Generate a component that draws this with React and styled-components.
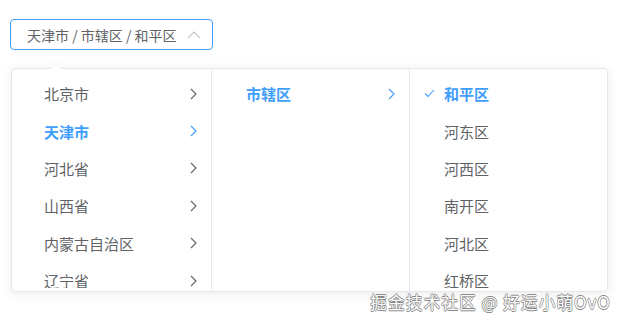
import React from "react";
import styled, { createGlobalStyle } from "styled-components";

const Global = createGlobalStyle`
  html, body { margin: 0; padding: 0; background: #fff; }
  body { font-family: "Noto Sans CJK SC", "Noto Sans", sans-serif; }
`;

const Page = styled.div`
  position: relative;
  width: 621px;
  height: 324px;
  padding: 19px 0 0 10px;
  box-sizing: border-box;
  overflow: hidden;
`;

const Input = styled.div`
  width: 203px;
  height: 31px;
  box-sizing: border-box;
  border: 1px solid #409eff;
  border-radius: 4px;
  display: flex;
  align-items: center;
  justify-content: space-between;
  padding: 0 11px 0 16px;
  font-size: 14px;
  color: #606266;
`;

const Panel = styled.div`
  position: relative;
  margin-top: 18px;
  margin-left: 1px;
  width: 597px;
  height: 224px;
  box-sizing: border-box;
  border: 1px solid #e4e7ed;
  border-radius: 4px;
  background: #fff;
  box-shadow: 0 2px 12px 0 rgba(0, 0, 0, 0.08);
  display: flex;
`;

const PopArrow = styled.div`
  position: absolute;
  top: -6px;
  left: 38px;
  width: 0;
  height: 0;
  border-left: 6px solid transparent;
  border-right: 6px solid transparent;
  border-bottom: 6px solid #ebeef5;
  &::after {
    content: "";
    position: absolute;
    left: -5px;
    top: 1px;
    border-left: 5px solid transparent;
    border-right: 5px solid transparent;
    border-bottom: 5px solid #fff;
  }
`;

const Column = styled.div`
  width: ${(p) => p.$w}px;
  box-sizing: border-box;
  border-right: ${(p) => (p.$last ? "none" : "1px solid #e4e7ed")};
`;

const List = styled.ul`
  list-style: none;
  margin: 0;
  padding: 6px 0 0;
  height: 219px;
  box-sizing: border-box;
  overflow: hidden;
`;

const Item = styled.li`
  position: relative;
  height: 37.4px;
  display: flex;
  align-items: center;
  justify-content: space-between;
  padding: 0 14px 0 ${(p) => p.$pl}px;
  font-size: 15px;
  color: ${(p) => (p.$active ? "#409eff" : "#606266")};
  font-weight: ${(p) => (p.$active ? 700 : 400)};
  white-space: nowrap;
`;

const CheckMark = styled.svg`
  position: absolute;
  left: 14px;
  top: 50%;
  margin-top: -5px;
`;

const Watermark = styled.div`
  position: absolute;
  left: 370px;
  top: 289px;
  font-size: 17px;
  letter-spacing: 0.8px;
  color: #fafafa;
  font-family: "Noto Sans CJK SC", sans-serif;
  text-shadow: 0.6px 0 0 #8a8a8a, -0.6px 0 0 #8a8a8a, 0 0.6px 0 #8a8a8a, 0 -0.6px 0 #8a8a8a, 0 0 1px #999;
  white-space: nowrap;
`;

const Chevron = ({ dir = "right", color = "#606266" }) =>
  dir === "right" ? (
    <svg width="7" height="12" viewBox="0 0 7 12">
      <path d="M1 1 L6 6 L1 11" fill="none" stroke={color} strokeWidth="1.1" />
    </svg>
  ) : (
    <svg width="14" height="8" viewBox="0 0 14 8">
      <path d="M1 7 L7 1 L13 7" fill="none" stroke="#c0c4cc" strokeWidth="1.1" />
    </svg>
  );

const provinces = ["北京市", "天津市", "河北省", "山西省", "内蒙古自治区", "辽宁省"];
const districts = ["和平区", "河东区", "河西区", "南开区", "河北区", "红桥区"];

export default function App() {
  return (
    <Page>
      <Global />
      <Input>
        <span>天津市 / 市辖区 / 和平区</span>
        <Chevron dir="up" />
      </Input>
      <Panel>
        <PopArrow />
        <Column $w={200}>
          <List>
            {provinces.map((p) => (
              <Item key={p} $pl={32} $active={p === "天津市"}>
                <span>{p}</span>
                <Chevron color={p === "天津市" ? "#409eff" : "#606266"} />
              </Item>
            ))}
          </List>
        </Column>
        <Column $w={198}>
          <List>
            <Item $pl={34} $active>
              <span>市辖区</span>
              <Chevron color="#409eff" />
            </Item>
          </List>
        </Column>
        <Column $w={197} $last>
          <List>
            {districts.map((d, i) => (
              <Item key={d} $pl={34} $active={i === 0}>
                {i === 0 && (
                  <CheckMark width="11" height="9" viewBox="0 0 11 9">
                    <path d="M1 4.5 L4 7.5 L10 1" fill="none" stroke="#409eff" strokeWidth="1.1" />
                  </CheckMark>
                )}
                <span>{d}</span>
              </Item>
            ))}
          </List>
        </Column>
      </Panel>
      <Watermark>掘金技术社区 @ 好运小萌OvO</Watermark>
    </Page>
  );
}
